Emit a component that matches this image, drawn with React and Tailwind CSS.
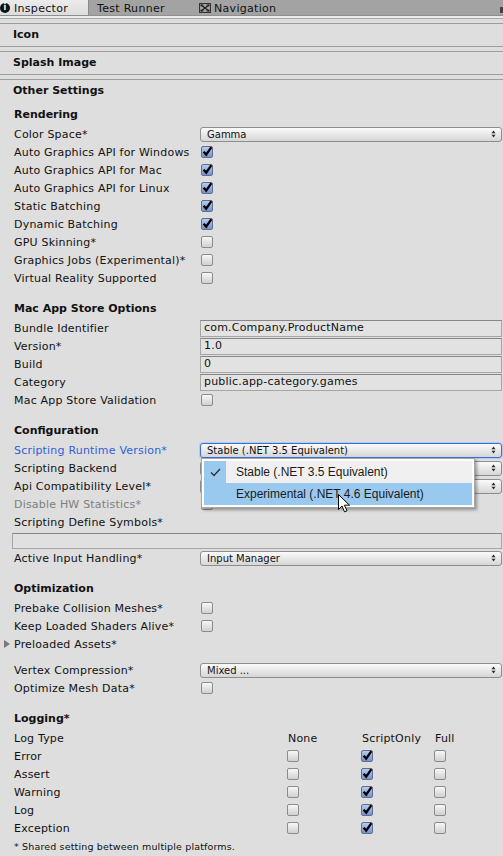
const Arrows = () => (
    <svg width="5" height="8" viewBox="0 0 5 8" className="shrink-0"><path d="M0.5 3.2 L2.5 0.6 L4.5 3.2Z M0.5 4.8 L2.5 7.4 L4.5 4.8Z" fill="#2a2a2a" /></svg>
)

function Popup({ value, focused }) {
    return (
        <div className={`h-[15px] w-full rounded-[3px] border ${focused ? 'border-[#3b6fd8] shadow-[0_0_0_1px_#b4c9f0]' : 'border-[#8e8e8e]'} bg-linear-to-b from-[#fbfbfb] to-[#d6d6d6] flex items-center justify-between pl-[6px] pr-[5px] text-[10px] leading-none text-[#111]`}>
            <span className="whitespace-nowrap pt-px">{value}</span>
            <Arrows />
        </div>
    )
}

function Check({ on }) {
    if (on) return (
        <div className="relative w-[12px] h-[12px] shrink-0 rounded-[2px] border border-[#5d6f93] bg-linear-to-b from-[#b6cbed] to-[#7494cd]">
            <svg className="absolute -left-px -top-[2px]" width="13" height="13" viewBox="0 0 13 13"><path d="M2.6 6.8 L5.2 9.6 L10.4 2.2" stroke="#000" strokeWidth="2.3" fill="none" /></svg>
        </div>
    )
    return <div className="w-[12px] h-[12px] shrink-0 rounded-[2px] border border-[#8c8c8c] bg-linear-to-b from-[#f7f7f7] to-[#d0d0d0]" />
}

function Field({ value }) {
    return <div className="h-[17px] w-full border border-[#a6a6a6] border-t-[#868686] bg-[#e2e2e2] pl-[3px] pt-px flex items-center text-[11px] tracking-[0.2px] text-[#111] whitespace-nowrap">{value}</div>
}

function Row({ label, children, labelClass }) {
    return (
        <div className="flex h-[18px] items-center">
            <div className={`w-[200px] shrink-0 pl-[14px] pt-[2px] text-[11px] leading-[14px] tracking-[0.2px] whitespace-nowrap ${labelClass || 'text-[#111]'}`}>{label}</div>
            <div className="flex-1 min-w-0 pr-[1px] flex items-center">{children}</div>
        </div>
    )
}

const Section = ({ title, className }) => (
    <div className={`h-[21px] pl-[14px] pt-[2px] flex items-center font-bold text-[11px] text-[#111] ${className || ''}`}>{title}</div>
)

const Foldout = ({ title, last }) => (
    <div className={`${last ? 'h-[23px] border-t' : 'h-[24px] border-y'} border-[#9c9c9c] flex items-center pl-[13px] pt-px font-bold text-[11px]`}>{title}</div>
)

const CB = ({ on }) => <div className="pl-[1px]"><Check on={on} /></div>

const LOGS = ['Error', 'Assert', 'Warning', 'Log', 'Exception']

export default function App() {
    return (
        <div className="relative w-[503px] h-[856px] overflow-hidden bg-[#dedede] font-['DejaVu_Sans',sans-serif] text-[#111]">
            {/* tab bar */}
            <div className="flex h-[15px] bg-[#a3a3a3] text-[11px] tracking-[0.3px] leading-none">
                <div className="w-[89px] flex items-center gap-[4px] bg-linear-to-b from-[#ececec] to-[#dcdcdc] border-r border-[#8a8a8a]">
                    <div className="w-[10px] h-[10px] rounded-full bg-[#111] text-white text-[8px] font-bold flex items-center justify-center">i</div>
                    <span className="pt-px">Inspector</span>
                </div>
                <div className="w-[101px] pl-[8px] pt-px flex items-center">Test Runner</div>
                <div className="flex-1 pl-[9px] flex items-center gap-[3px]">
                    <svg width="12" height="10" viewBox="0 0 12 10"><rect x="0.5" y="0.5" width="11" height="9" fill="none" stroke="#333" /><path d="M2 2 L10 8 M10 2 L2 8" stroke="#222" strokeWidth="1.4" /><path d="M1.5 1.5h3v1h-2v1h-1z M10.5 1.5h-3v1h2v1h1z M1.5 8.5h3v-1h-2v-1h-1z M10.5 8.5h-3v-1h2v-1h1z" fill="#222" /></svg>
                    <span className="pt-px">Navigation</span>
                </div>
                <div className="w-[3px] h-[6px] mt-[7px] bg-[#444]" />
            </div>
            <div className="h-px bg-[#8f8f8f]" />
            <div className="h-[2px] bg-[#ececec]" />
            <div className="h-px bg-[#a9a9a9]" />
            <div className="h-[4px]" />

            {/* foldouts */}
            <Foldout title="Icon" />
            <div className="h-[4px]" />
            <Foldout title="Splash Image" />
            <div className="h-[4px]" />
            <Foldout title="Other Settings" last />

            <Section title="Rendering" className="mt-[2px]" />
            <Row label="Color Space*"><Popup value="Gamma" /></Row>
            <Row label="Auto Graphics API for Windows"><CB on /></Row>
            <Row label="Auto Graphics API for Mac"><CB on /></Row>
            <Row label="Auto Graphics API for Linux"><CB on /></Row>
            <Row label="Static Batching"><CB on /></Row>
            <Row label="Dynamic Batching"><CB on /></Row>
            <Row label="GPU Skinning*"><CB /></Row>
            <Row label="Graphics Jobs (Experimental)*"><CB /></Row>
            <Row label="Virtual Reality Supported"><CB /></Row>

            <Section title="Mac App Store Options" className="mt-[11px]" />
            <Row label="Bundle Identifier"><Field value="com.Company.ProductName" /></Row>
            <Row label="Version*"><Field value="1.0" /></Row>
            <Row label="Build"><Field value="0" /></Row>
            <Row label="Category"><Field value="public.app-category.games" /></Row>
            <Row label="Mac App Store Validation"><CB /></Row>

            <Section title="Configuration" className="mt-[11px]" />
            <Row label="Scripting Runtime Version*" labelClass="text-[#2f5fd8]"><Popup value="Stable (.NET 3.5 Equivalent)" focused /></Row>
            <Row label="Scripting Backend"><Popup value="" /></Row>
            <Row label="Api Compatibility Level*"><Popup value="" /></Row>
            <Row label="Disable HW Statistics*" labelClass="text-[#7f7f7f]"><CB /></Row>
            <Row label="Scripting Define Symbols*" />
            <div className="h-[18px] pl-[12px] pr-[1px] flex items-end">
                <div className="h-[16px] w-full border border-[#a6a6a6] border-t-[#868686] bg-[#e0e0e0]" />
            </div>
            <Row label="Active Input Handling*"><Popup value="Input Manager" /></Row>

            <Section title="Optimization" className="mt-[11px]" />
            <Row label="Prebake Collision Meshes*"><CB /></Row>
            <Row label="Keep Loaded Shaders Alive*"><CB /></Row>
            <div className="flex h-[18px] items-center pl-[4px] gap-[4px] text-[11px] tracking-[0.2px]">
                <svg width="6" height="8" viewBox="0 0 6 8"><path d="M0 0 L6 4 L0 8Z" fill="#7a7a7a" /></svg>
                <span className="pt-[2px] leading-[14px]">Preloaded Assets*</span>
            </div>
            <div className="h-[8px]" />
            <Row label="Vertex Compression*"><Popup value="Mixed ..." /></Row>
            <Row label="Optimize Mesh Data*"><CB /></Row>

            <Section title="Logging*" className="mt-[11px]" />
            <div className="flex h-[18px] items-center pt-[2px] text-[11px] tracking-[0.2px]">
                <div className="w-[287px] pl-[14px]">Log Type</div>
                <div className="w-[74px] pl-[1px]">None</div>
                <div className="w-[73px] pl-[1px]">ScriptOnly</div>
                <div className="pl-[1px]">Full</div>
            </div>
            {LOGS.map(l => (
                <div key={l} className="flex h-[18px] items-center text-[11px] tracking-[0.2px]">
                    <div className="w-[287px] pl-[14px] pt-[2px] leading-[14px]">{l}</div>
                    <div className="w-[74px]"><Check /></div>
                    <div className="w-[73px]"><Check on /></div>
                    <div><Check /></div>
                </div>
            ))}
            <div className="h-[18px] pl-[14px] pt-[2px] flex items-center text-[9.5px] tracking-[0.15px]">* Shared setting between multiple platforms.</div>

            {/* open popup menu */}
            <div className="absolute left-[201px] top-[458px] w-[274px] h-[50px] bg-white border border-[#a7a7a7] shadow-[2px_2px_3px_rgba(0,0,0,0.35)] p-[2px] font-['Liberation_Sans',sans-serif] text-[12px] text-[#1b1b1b]">
                <div className="flex h-[22px]">
                    <div className="w-[22px] bg-[#99c9ef] flex items-center justify-center">
                        <svg width="11" height="9" viewBox="0 0 11 9"><path d="M1 4.5 L4 7.5 L10 1" stroke="#333" strokeWidth="1.4" fill="none" /></svg>
                    </div>
                    <div className="flex-1 bg-[#f0f0f0] flex items-center pl-[10px]">Stable (.NET 3.5 Equivalent)</div>
                </div>
                <div className="flex h-[22px] bg-[#99c9ef]">
                    <div className="w-[22px]" />
                    <div className="flex items-center pl-[10px]">Experimental (.NET 4.6 Equivalent)</div>
                </div>
            </div>
            {/* mouse cursor */}
            <svg className="absolute left-[338px] top-[494px]" width="13" height="19" viewBox="0 0 13 19">
                <path d="M0.5 0.5 L0.5 15.5 L4 12 L6.5 17.8 L9 16.8 L6.5 11.2 L11.5 11.2 Z" fill="#fff" stroke="#000" strokeWidth="1" strokeLinejoin="miter" />
            </svg>
        </div>
    )
}
